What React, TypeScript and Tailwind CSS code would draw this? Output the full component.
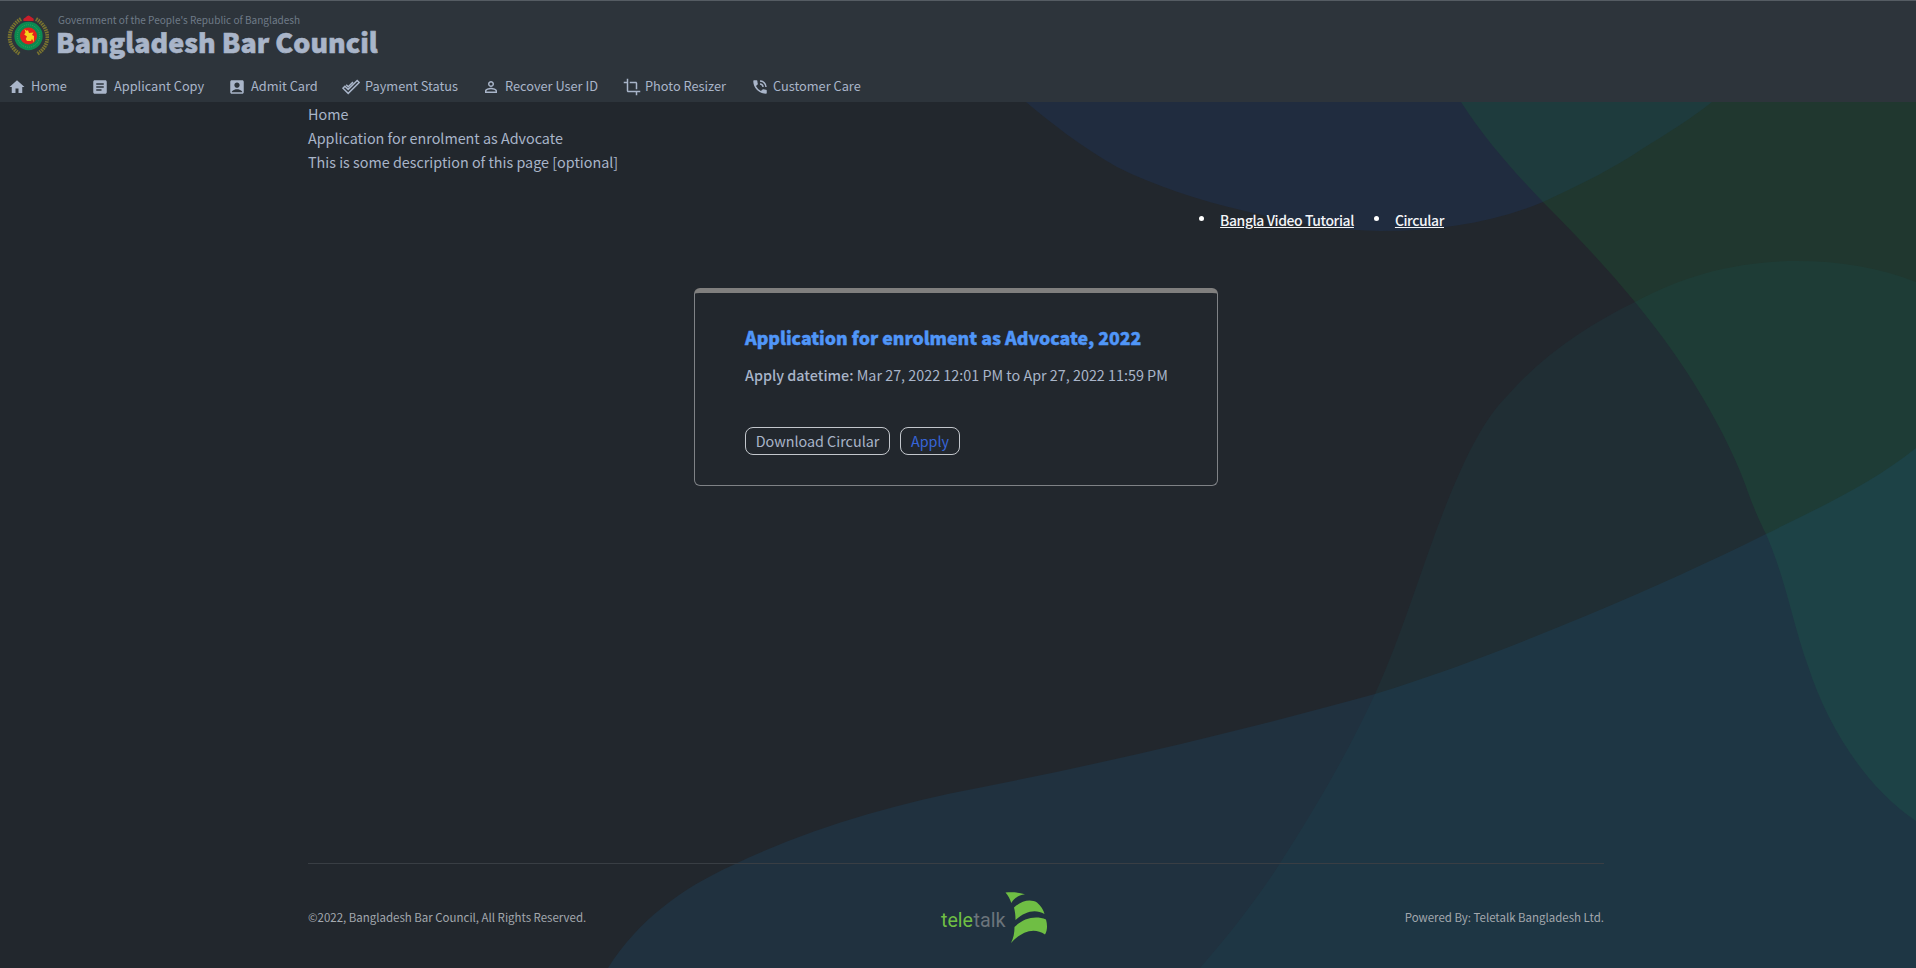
import React from "react";
import {
  MdHome,
  MdArticle,
  MdAccountBox,
  MdPersonOutline,
  MdCrop,
  MdPhoneInTalk,
} from "react-icons/md";

function DoubleCheck({ className }: { className?: string }) {
  return (
    <svg viewBox="0 0 18 16" className={className} fill="none" stroke="currentColor" strokeWidth="1.5">
      <path d="M.9 9.2L2.900 7.200L6.200 10.400L15.200 1.500L17.200 3.500L6.200 14.400Z" />
      <path d="M4.200 5.800L6.300 7.800L11 3.100" />
    </svg>
  );
}

const nav = [
  { label: "Home", Icon: MdHome, item: "w-[83px]", icon: "size-[18px] mr-[5px]" },
  { label: "Applicant Copy", Icon: MdArticle, item: "w-[137px]", icon: "size-[18px] mr-[5px]" },
  { label: "Admit Card", Icon: MdAccountBox, item: "w-[114px]", icon: "size-[18px] mr-[5px]" },
  { label: "Payment Status", Icon: DoubleCheck, item: "w-[140px]", icon: "w-[18px] h-4 mr-[5px]" },
  { label: "Recover User ID", Icon: MdPersonOutline, item: "w-[141px]", icon: "size-[18px] mr-[5px]" },
  { label: "Photo Resizer", Icon: MdCrop, item: "w-[128px]", icon: "size-[18px] mr-[4px]" },
  { label: "Customer Care", Icon: MdPhoneInTalk, item: "w-[140px]", icon: "size-[18px] mr-[4px]" },
];

function Emblem() {
  return (
    <svg viewBox="0 0 42 42" className="h-[42px] w-[42px]">
      <path d="M14 4C-1 13 -1 31 13 39" fill="none" stroke="#7a742f" strokeWidth="3.800" strokeDasharray="1.6 .8" />
      <path d="M29 4C44 13 44 31 30 39" fill="none" stroke="#7a742f" strokeWidth="3.800" strokeDasharray="1.6 .8" />
      <path d="M16.500 6C15.500 3 18.500 3 19 2C20.500 0 22.500 0 24 2C25.500 3 27.500 3 26.500 6Z" fill="#c81e2b" />
      <circle cx="21.500" cy="21" r="14.200" fill="#0b8a50" />
      <circle cx="21.500" cy="21" r="11.200" fill="none" stroke="#3c9d62" strokeWidth="1" strokeDasharray="1 1" />
      <circle cx="21.500" cy="21" r="8.500" fill="#e3211c" />
      <path d="M17.500 14L19.500 15.800L21 15.200L22 18L26.500 17.500L25 20L27 21L26.800 27.500L25 23.800L24 26L20 26L18.800 24L20 21.500L17.200 19.500L18.500 17.500Z" fill="#f6d31b" />
    </svg>
  );
}

function TeletalkLogo() {
  return (
    <svg viewBox="0 0 110 54" className="mt-[4px] h-[54px] w-[110px]">
      <text x="1" y="36" fontFamily="Roboto, sans-serif" fontSize="19.500" fill="#6fbe44" textLength="32" lengthAdjust="spacingAndGlyphs">tele</text>
      <text x="33.500" y="36" fontFamily="Roboto, sans-serif" fontSize="19.500" fill="#6b747b" textLength="32" lengthAdjust="spacingAndGlyphs">talk</text>
      <g fill="#6fbe44">
        <path d="M65.500 1.500C72 .8 79 1.300 85 3.300C78 4.500 74 7.500 71.300 12C70 7.800 68 4.300 65.500 1.500Z" />
        <path d="M74 16.500C82 9 91 8 97 11.500C101 15 103.500 19 104.500 23C95 17.500 85 20.500 75.500 29C75.500 24.500 75 20.500 74 16.500Z" />
        <path d="M74.500 36C83 27.500 95 24 106 28.500C107.500 34 107.500 39 105 43.500C93 35 80 42 71 52C73.500 47 74.500 42 74.500 36Z" />
      </g>
    </svg>
  );
}

function Backdrop() {
  return (
    <svg viewBox="0 0 1916 968" className="absolute inset-0 -z-10 h-full w-full">
      <path d="M1026 102C1050 122 1080 146 1117 167C1155 186 1198 200 1245 211C1290 222 1335 231 1380 231C1440 231 1495 222 1543 202C1582 184 1614 168 1642 149C1668 133 1692 118 1712 102Z" fill="#183f86" fillOpacity=".2" />
      <path d="M1461 102C1484 138 1514 172 1543 202C1576 235 1607 268 1635 302C1661 334 1683 364 1701 395C1722 430 1738 463 1749 495C1757 516 1761 524 1766 534C1786 580 1793 625 1808 666C1827 725 1865 787 1916 821V102Z" fill="#187a36" fillOpacity=".2" />
      <path d="M1200 968C1228 936 1254 903 1277 868C1319 803 1350 748 1375 694C1405 628 1423 561 1450 495C1467 455 1483 420 1508 395C1543 355 1588 325 1635 302C1686 274 1740 261 1797 261C1841 261 1880 268 1916 282V968Z" fill="#186a76" fillOpacity=".1" />
      <path d="M608 968C638 921 680 889 733 865C808 829 893 804 978 788C1110 762 1249 729 1375 694C1450 671 1520 643 1588 615C1652 588 1710 562 1766 534C1821 507 1874 482 1916 448V968Z" fill="#185a86" fillOpacity=".2" />
    </svg>
  );
}

export default function App() {
  return (
    <div className="relative isolate flex h-[968px] flex-col overflow-hidden bg-[#22272d] font-['Noto_Sans_CJK_SC','Noto_Sans',sans-serif] text-[#a9b5c9]">
      <Backdrop />
      <header className="h-[102px] shrink-0 border-t border-[#555c63] bg-[#2d343b]">
        <div className="flex h-[70px] pl-[7px]">
          <div className="pt-[14px]"><Emblem /></div>
          <div className="ml-[7px] flex flex-col pt-[12px] whitespace-nowrap">
            <span className="ml-[2px] text-[10.05px] leading-[14px] text-[#6f7b88]">Government of the People's Republic of Bangladesh</span>
            <h1 className="text-[26.9px] leading-[30px] font-black [-webkit-text-stroke:0.6px_currentColor]">Bangladesh Bar Council</h1>
          </div>
        </div>
        <nav className="flex h-[30px] pl-2">
          {nav.map(({ label, Icon, item, icon }) => (
            <a key={label} className={`flex h-[31px] shrink-0 items-center text-[12.77px] whitespace-nowrap ${item}`}>
              <Icon className={`shrink-0 ${icon}`} />
              <span className="-mt-[2px]">{label}</span>
            </a>
          ))}
        </nav>
      </header>
      <main className="mr-[312px] ml-[308px] flex flex-1 flex-col">
        <div className="text-[14.35px] leading-6">
          <p>Home</p>
          <p>Application for enrolment as Advocate</p>
          <p>This is some description of this page [optional]</p>
        </div>
        <ul className="mt-[34px] flex h-6 items-center justify-end gap-[20px] pr-[160px] text-[13.95px] font-medium tracking-[-0.4px] text-[#f3f5f8]">
          <li className="flex items-center gap-4"><span className="-mt-[2px] size-[5px] rounded-full bg-white" /><a className="underline">Bangla Video Tutorial</a></li>
          <li className="flex items-center gap-4"><span className="-mt-[2px] size-[5px] rounded-full bg-white" /><a className="underline">Circular</a></li>
        </ul>
        <section className="mt-[56px] ml-[386px] h-[198px] w-[524px] rounded-md border border-t-[5px] border-[#7f8286] border-t-[#807f7e] bg-[#22272d] pl-[50px] whitespace-nowrap">
          <h2 className="mt-[30px] text-[17.73px] leading-7 font-black text-[#5096f8] [-webkit-text-stroke:0.4px_currentColor]">Application for enrolment as Advocate, 2022</h2>
          <p className="mt-3 text-[14.35px] leading-6"><span className="font-medium">Apply datetime:</span> Mar 27, 2022 12:01 PM to Apr 27, 2022 11:59 PM</p>
          <div className="mt-[40px] flex gap-[10px] text-[14.35px]">
            <button className="h-7 w-[145px] rounded-lg border border-[#c3c7cc] leading-[26px]">Download Circular</button>
            <button className="h-7 w-[60px] rounded-lg border border-[#c3c7cc] leading-[26px] text-[#3765d8]">Apply</button>
          </div>
        </section>
      </main>
      <footer className="mr-[312px] ml-[308px] flex h-[105px] shrink-0 items-center justify-between border-t border-[#393e44] text-[11.48px] text-[#a3a8ae]">
        <span className="mt-[4px]">©2022, Bangladesh Bar Council, All Rights Reserved.</span>
        <TeletalkLogo />
        <span className="mt-[4px]">Powered By: Teletalk Bangladesh Ltd.</span>
      </footer>
    </div>
  );
}
